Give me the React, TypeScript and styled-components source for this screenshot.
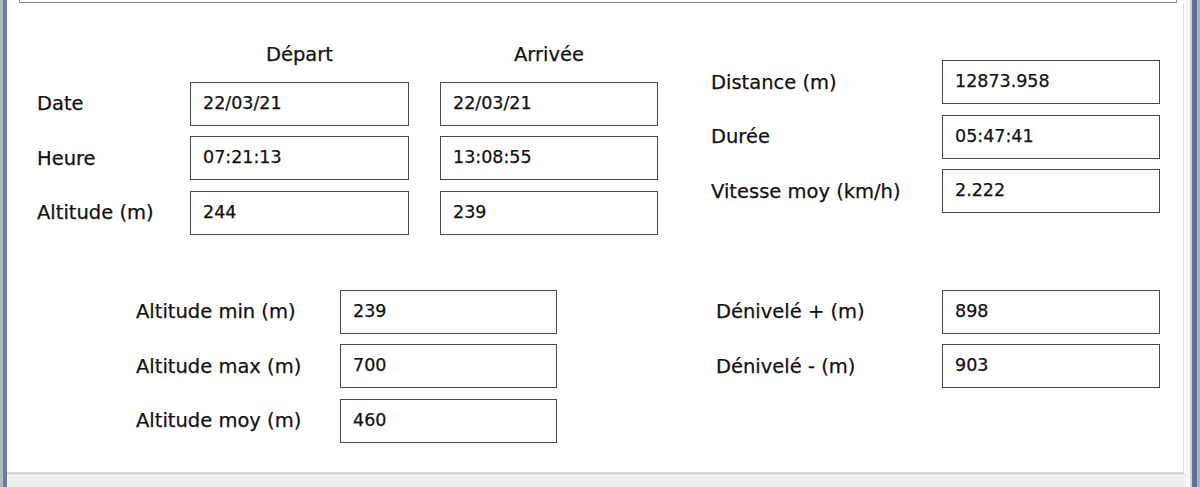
import * as React from 'react';
import styled, {createGlobalStyle} from 'styled-components';

const GlobalStyle = createGlobalStyle`
    html, body {
        margin: 0;
        padding: 0;
        background: #ffffff;
    }
    body {
        font-family: "DejaVu Sans", "Liberation Sans", sans-serif;
    }
`;

const Window = styled.div`
    display: flex;
    width: 1200px;
    height: 487px;
    overflow: hidden;
`;

const LeftFrame = styled.div`
    width: 7px;
    flex: none;
    background: linear-gradient(to right, #b0b8c4 0, #b0b8c4 3px, #6b7d97 3px, #6b7d97 7px);
`;

const RightFrame = styled.div`
    width: 14px;
    flex: none;
    background: linear-gradient(to right, #f6f6f6 0, #f6f6f6 4px, #cdd2da 4px, #cdd2da 6px, #5e7392 6px, #5e7392 11px, #a9b3c3 11px);
`;

const Client = styled.div`
    flex: 1;
    display: flex;
    flex-direction: column;
    min-width: 0;
`;

const PrevBoxEdge = styled.div`
    height: 2px;
    margin: 0 9px 0 12px;
    border: 1px solid #8c8c8c;
    border-top: none;
    flex: none;
`;

const Panel = styled.div`
    flex: 1;
    display: flex;
    flex-direction: column;
    padding: 35px 0 0 30px;
    border-right: 1px solid #dcdcdc;
    border-bottom: 2px solid #d2d2d2;
    margin-right: 2px;
    background: #ffffff;
`;

const Footer = styled.div`
    height: 12px;
    flex: none;
    background: #efefef;
    border-top: 1px solid #e4e4e4;
`;

const Section = styled.div<{ $top?: number }>`
    display: flex;
    align-items: flex-start;
    margin-top: ${p => p.$top ?? 0}px;
`;

const FieldGrid = styled.div<{ $cols: string; $head?: boolean; $left?: number; $top?: number }>`
    display: grid;
    grid-template-columns: ${p => p.$cols};
    grid-template-rows: ${p => (p.$head ? '33px' : 'none')};
    grid-auto-rows: 44px;
    row-gap: 10.5px;
    column-gap: 31px;
    align-items: center;
    margin-left: ${p => p.$left ?? 0}px;
    margin-top: ${p => p.$top ?? 0}px;
`;

const ColumnHead = styled.div`
    display: flex;
    align-items: center;
    justify-content: center;
    font-size: 19.5px;
    color: #111111;
    -webkit-text-stroke: 0.25px #111111;
`;

const Label = styled.div`
    font-size: 19.5px;
    color: #111111;
    -webkit-text-stroke: 0.25px #111111;
    white-space: nowrap;
`;

const Field = styled.div`
    height: 44px;
    box-sizing: border-box;
    border: 1px solid #4a4a4a;
    background: #ffffff;
    display: flex;
    align-items: center;
    padding: 0 0 2px 12px;
    font-size: 17.5px;
    color: #111111;
    -webkit-text-stroke: 0.25px #111111;
`;

type Row = { label: string; values: string[] };

const timesRows: Row[] = [
    {label: 'Date', values: ['22/03/21', '22/03/21']},
    {label: 'Heure', values: ['07:21:13', '13:08:55']},
    {label: 'Altitude (m)', values: ['244', '239']},
];

const summaryRows: Row[] = [
    {label: 'Distance (m)', values: ['12873.958']},
    {label: 'Durée', values: ['05:47:41']},
    {label: 'Vitesse moy (km/h)', values: ['2.222']},
];

const altitudeRows: Row[] = [
    {label: 'Altitude min (m)', values: ['239']},
    {label: 'Altitude max (m)', values: ['700']},
    {label: 'Altitude moy (m)', values: ['460']},
];

const climbRows: Row[] = [
    {label: 'Dénivelé + (m)', values: ['898']},
    {label: 'Dénivelé - (m)', values: ['903']},
];

const renderRows = (rows: Row[]) =>
    rows.map(row => (
        <React.Fragment key={row.label}>
            <Label>{row.label}</Label>
            {row.values.map((v, i) => <Field key={i}>{v}</Field>)}
        </React.Fragment>
    ));

const App = () => {
    return (
        <>
            <GlobalStyle/>
            <Window>
                <LeftFrame/>
                <Client>
                    <PrevBoxEdge/>
                    <Panel>
                        <Section>
                            <FieldGrid $cols="122px 219px 218px" $head>
                                <div/>
                                <ColumnHead>Départ</ColumnHead>
                                <ColumnHead>Arrivée</ColumnHead>
                                {renderRows(timesRows)}
                            </FieldGrid>
                            <FieldGrid $cols="200px 218px" $left={53} $top={22}>
                                {renderRows(summaryRows)}
                            </FieldGrid>
                        </Section>
                        <Section $top={55}>
                            <FieldGrid $cols="173px 217px" $left={99}>
                                {renderRows(altitudeRows)}
                            </FieldGrid>
                            <FieldGrid $cols="195px 218px" $left={159}>
                                {renderRows(climbRows)}
                            </FieldGrid>
                        </Section>
                    </Panel>
                    <Footer/>
                </Client>
                <RightFrame/>
            </Window>
        </>
    );
};

export default App;
